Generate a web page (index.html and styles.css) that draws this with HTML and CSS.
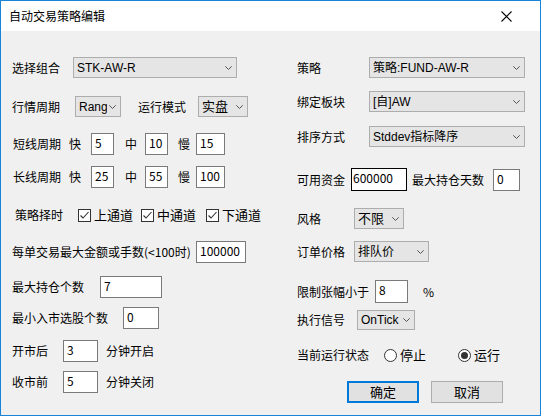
FILE: index.html
```html
<!DOCTYPE html>
<html lang="zh-CN">
<head>
  <meta charset="UTF-8" />
  <title>自动交易策略编辑</title>
  <link rel="stylesheet" href="styles.css">
</head>
<body>
  <div class="dialog">
    <div class="titlebar">
      <span class="title">自动交易策略编辑</span>
      <svg class="close" width="11" height="11" viewBox="0 0 11 11">
        <path d="M0.5 0.5 L10.5 10.5 M10.5 0.5 L0.5 10.5" stroke="#000" stroke-width="1.1" fill="none"/>
      </svg>
    </div>

    <div class="content">
      <!-- left column -->
      <div class="col col-left">
        <div class="row">
          <span class="lbl w61">选择组合</span>
          <div class="combo w164"><span class="val">STK-AW-R</span><i class="chev"></i></div>
        </div>
        <div class="row">
          <span class="lbl w63">行情周期</span>
          <div class="combo w46"><span class="val">Rang</span><i class="chev"></i></div>
          <span class="lbl w60 ml17">运行模式</span>
          <div class="combo w50"><span class="val big">实盘</span><i class="chev"></i></div>
        </div>
        <div class="row">
          <span class="lbl w56 ml1">短线周期</span>
          <span class="lbl w22">快</span>
          <div class="edit w23">5</div>
          <span class="lbl w20 ml11">中</span>
          <div class="edit w23">10</div>
          <span class="lbl w18 ml10">慢</span>
          <div class="edit w29">15</div>
        </div>
        <div class="row">
          <span class="lbl w56 ml1">长线周期</span>
          <span class="lbl w22">快</span>
          <div class="edit w23">25</div>
          <span class="lbl w20 ml11">中</span>
          <div class="edit w23">55</div>
          <span class="lbl w18 ml10">慢</span>
          <div class="edit w29">100</div>
        </div>
        <div class="row">
          <span class="lbl w63 ml3">策略择时</span>
          <label class="check"><i class="box"></i>上通道</label>
          <label class="check ml8"><i class="box"></i>中通道</label>
          <label class="check ml10"><i class="box"></i>下通道</label>
        </div>
        <div class="row">
          <span class="lbl w184">每单交易最大金额或手数(&lt;100时)</span>
          <div class="edit w50">100000</div>
        </div>
        <div class="row">
          <span class="lbl w88">最大持仓个数</span>
          <div class="edit w62">7</div>
        </div>
        <div class="row">
          <span class="lbl w111">最小入市选股个数</span>
          <div class="edit w36">0</div>
        </div>
        <div class="row">
          <span class="lbl w51">开市后</span>
          <div class="edit w35">3</div>
          <span class="lbl ml8">分钟开启</span>
        </div>
        <div class="row">
          <span class="lbl w51">收市前</span>
          <div class="edit w35">5</div>
          <span class="lbl ml8">分钟关闭</span>
        </div>
      </div>

      <!-- right column -->
      <div class="col col-right">
        <div class="row">
          <span class="lbl w72">策略</span>
          <div class="combo w156"><span class="val">策略:FUND-AW-R</span><i class="chev"></i></div>
        </div>
        <div class="row">
          <span class="lbl w72">绑定板块</span>
          <div class="combo w156"><span class="val">[自]AW</span><i class="chev"></i></div>
        </div>
        <div class="row">
          <span class="lbl w72">排序方式</span>
          <div class="combo w156"><span class="val">Stddev指标降序</span><i class="chev"></i></div>
        </div>
        <div class="row">
          <span class="lbl w54">可用资金</span>
          <div class="edit w56 dark">600000</div>
          <span class="lbl w81 ml5">最大持仓天数</span>
          <div class="edit w27">0</div>
        </div>
        <div class="row">
          <span class="lbl w57">风格</span>
          <div class="combo w50"><span class="val big">不限</span><i class="chev"></i></div>
        </div>
        <div class="row">
          <span class="lbl w57">订单价格</span>
          <div class="combo w75"><span class="val">排队价</span><i class="chev"></i></div>
        </div>
        <div class="row">
          <span class="lbl w78">限制张幅小于</span>
          <div class="edit w33 tall">8</div>
          <span class="lbl ml15">%</span>
        </div>
        <div class="row">
          <span class="lbl w60">执行信号</span>
          <div class="combo w58 short"><span class="val">OnTick</span><i class="chev"></i></div>
        </div>
        <div class="row">
          <span class="lbl w87">当前运行状态</span>
          <label class="radio"><i class="dot"></i>停止</label>
          <label class="radio on ml32"><i class="dot"></i>运行</label>
        </div>
        <div class="row buttons">
          <button class="btn default">确定</button>
          <button class="btn">取消</button>
        </div>
      </div>
    </div>
  </div>
</body>
</html>
```

FILE: styles.css
```css
* {
  box-sizing: border-box;
}

body {
  margin: 0;
  width: 541px;
  height: 416px;
  font-family: "Noto Sans CJK SC", "Microsoft YaHei", sans-serif;
  font-size: 12px;
  color: #000;
}

.dialog {
  width: 541px;
  height: 416px;
  border: 1px solid #1883d7;
  background: #f0f0f0;
}

.titlebar {
  height: 30px;
  background: #fff;
  display: flex;
  align-items: center;
  justify-content: space-between;
  padding: 0 28px 0 8px;
}

.title {
  font-size: 12px;
  line-height: 16px;
}

.content {
  display: grid;
  grid-template-columns: 285px 1fr;
  padding: 26px 0 0 11px;
}

.col {
  display: grid;
  align-items: start;
}

.col-left {
  grid-template-rows: 39px 37px 33px 41px 34px 35px 31px 33px 31px 22px;
}

.col-right {
  grid-template-rows: 34px 35px 42px 40px 33px 39px 30px 37px 34px 22px;
}

.row {
  display: flex;
  align-items: center;
}

.lbl {
  line-height: 16px;
  white-space: nowrap;
  flex: none;
}

/* combobox */
.combo {
  height: 21px;
  border: 1px solid #adadad;
  background: #e5e5e5;
  display: flex;
  align-items: center;
  padding: 0 4px 0 3px;
  line-height: 16px;
  white-space: nowrap;
  flex: none;
}

.combo .val {
  flex: 1;
  overflow: hidden;
  margin-right: 2px;
  font-family: "Liberation Sans", "Noto Sans CJK SC", sans-serif;
}

.combo.short {
  height: 20px;
}

.combo .big {
  font-size: 13px;
}

.chev {
  width: 7px;
  height: 4px;
  flex: none;
  background: url("data:image/svg+xml;utf8,<svg xmlns='http://www.w3.org/2000/svg' width='7' height='4'><path d='M0.3 0.3 L3.5 3.5 L6.7 0.3' stroke='%23555' fill='none'/></svg>") no-repeat;
}

/* text box */
.edit {
  height: 22px;
  border: 1px solid #7a7a7a;
  background: #fff;
  padding: 1px 3px 0;
  line-height: 16px;
  white-space: nowrap;
  overflow: hidden;
  flex: none;
}

.edit.dark {
  border-color: #000;
  height: 23px;
  padding-left: 1px;
}

.edit.tall {
  height: 23px;
}

/* checkbox / radio */
.check,
.radio {
  display: flex;
  align-items: center;
  gap: 3px;
  line-height: 16px;
  font-size: 13px;
}

.box {
  width: 13px;
  height: 13px;
  border: 1px solid #333;
  background: #fff url("data:image/svg+xml;utf8,<svg xmlns='http://www.w3.org/2000/svg' width='11' height='11'><path d='M1.5 5.5 L4 8 L9.5 2' stroke='%23333' stroke-width='1.1' fill='none'/></svg>") no-repeat center;
}

.dot {
  width: 13px;
  height: 13px;
  border: 1px solid #333;
  border-radius: 50%;
  background: #fff;
  display: flex;
  align-items: center;
  justify-content: center;
}

.radio.on .dot::after {
  content: "";
  width: 7px;
  height: 7px;
  border-radius: 50%;
  background: #333;
}

/* buttons */
.buttons {
  margin-left: 50px;
  gap: 12px;
}

.btn {
  width: 72px;
  height: 22px;
  border: 1px solid #adadad;
  background: #e1e1e1;
  font-family: inherit;
  font-size: 13px;
  line-height: 16px;
  padding: 0;
  color: #000;
}

.btn.default {
  border: 2px solid #0078d7;
}

/* widths */
.w18 { width: 18px; }
.w20 { width: 20px; }
.w22 { width: 22px; }
.w23 { width: 23px; }
.w27 { width: 27px; }
.w29 { width: 29px; }
.w33 { width: 33px; }
.w35 { width: 35px; }
.w36 { width: 36px; }
.w46 { width: 46px; }
.w50 { width: 50px; }
.w51 { width: 51px; }
.w54 { width: 54px; }
.w56 { width: 56px; }
.w57 { width: 57px; }
.w58 { width: 58px; }
.w60 { width: 60px; }
.w61 { width: 61px; }
.w62 { width: 62px; }
.w63 { width: 63px; }
.w72 { width: 72px; }
.w75 { width: 75px; }
.w78 { width: 78px; }
.w81 { width: 81px; }
.w87 { width: 87px; }
.w88 { width: 88px; }
.w111 { width: 111px; }
.w156 { width: 156px; }
.w164 { width: 164px; }
.w184 { width: 184px; }

.ml1 { margin-left: 1px; }
.ml3 { margin-left: 3px; }
.ml5 { margin-left: 5px; }
.ml8 { margin-left: 8px; }
.ml10 { margin-left: 10px; }
.ml11 { margin-left: 11px; }
.ml15 { margin-left: 15px; }
.ml17 { margin-left: 17px; }
.ml32 { margin-left: 32px; }
```
